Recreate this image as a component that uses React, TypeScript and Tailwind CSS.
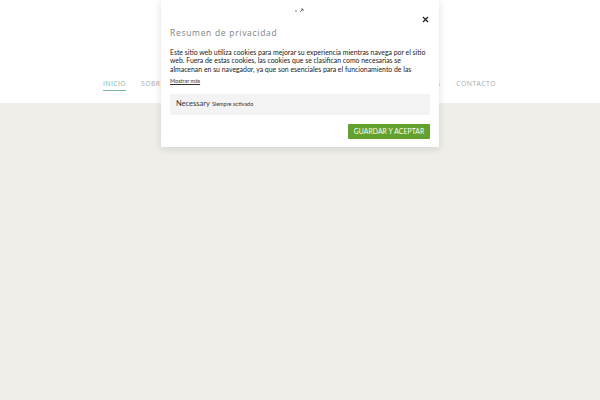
import React from "react";

const leftNav = ["INICIO", "SOBRE MÍ", "SERVICIOS", "PORTAFOLIO"];
const rightNav = ["BLOG", "CONTACTO"];

const bodyLines = [
  "Este sitio web utiliza cookies para mejorar su experiencia mientras navega por el sitio",
  "web. Fuera de estas cookies, las cookies que se clasifican como necesarias se",
  "almacenan en su navegador, ya que son esenciales para el funcionamiento de las",
];

export default function App() {
  return (
    <div className="relative w-[600px] h-[400px] overflow-hidden bg-[#efeee9] font-['Open_Sans',sans-serif]">
      {/* Header */}
      <header className="h-[103px] bg-white flex items-end">
        <nav className="flex w-full pl-[103px] pr-[104px] pb-[12px] text-[6.8px] tracking-[0.45px]">
          <div className="flex gap-[15px]">
            {leftNav.map((item, i) => (
              <span
                key={item}
                className={`pb-[1px] ${
                  i === 0 ? "text-[#7ab8a5] border-b border-[#7ab8a5]" : "text-[#a8a8a8]"
                }`}
              >
                {item}
              </span>
            ))}
          </div>
          <div className="flex gap-[16px] ml-auto">
            {rightNav.map((item) => (
              <span key={item} className="pb-[1px] text-[#a8a8a8]">
                {item}
              </span>
            ))}
          </div>
        </nav>
      </header>

      {/* Privacy modal */}
      <div className="absolute left-[161px] top-0 w-[278px] h-[147px] bg-white shadow-[0_2px_8px_rgba(0,0,0,0.12)] px-[9px] font-['Lato',sans-serif]">
        <div className="flex justify-center pt-[7px] h-[13px]">
          <svg width="12" height="6" viewBox="0 0 12 6" className="text-[#555]">
            <path d="M1 4h2" stroke="currentColor" strokeWidth="0.8" />
            <path d="M6 5l3-3M7 2h2v2" stroke="currentColor" strokeWidth="0.8" fill="none" />
          </svg>
        </div>
        <div className="flex justify-end pr-[1px] mt-[3px] h-[7px]">
          <svg width="7" height="7" viewBox="0 0 7 7">
            <path d="M1 1l5 5M6 1L1 6" stroke="#222" strokeWidth="1.3" />
          </svg>
        </div>
        <h2 className="mt-[6px] text-[8.5px] tracking-[0.7px] text-[#7d8482] leading-none font-['Open_Sans',sans-serif]">
          Resumen de privacidad
        </h2>
        <div className="mt-[10px] text-[6.9px] leading-[8.5px] text-[#222]">
          {bodyLines.map((line) => (
            <p key={line} className="whitespace-nowrap">
              {line}
            </p>
          ))}
        </div>
        <a className="block mt-[6px] text-[5.5px] text-[#333] underline leading-none">Mostrar más</a>
        <div className="mt-[9px] h-[21px] bg-[#f3f3f3] rounded-[2px] flex items-center px-[6px] gap-[2px]">
          <span className="text-[7.5px] text-[#333]">Necessary</span>
          <span className="text-[5.5px] text-[#333]">Siempre activado</span>
        </div>
        <div className="flex justify-end mt-[9px]">
          <button className="h-[15px] w-[82px] bg-[#62a12d] text-white text-[6.8px] tracking-[0.1px] rounded-[1px]">
            GUARDAR Y ACEPTAR
          </button>
        </div>
      </div>
    </div>
  );
}
